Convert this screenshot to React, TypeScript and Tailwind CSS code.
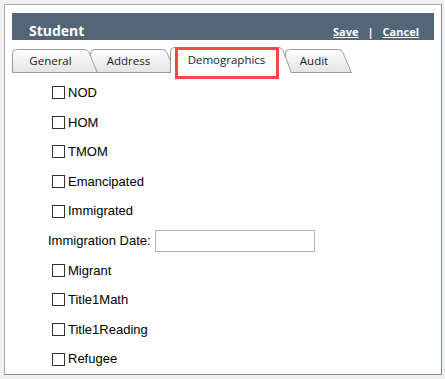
import React from 'react';

type TabProps = {
  label: string;
  w: number;
  h: number;
  selected?: boolean;
  className: string;
};

// folder-style tab: rounded top-left, slanted right edge
function TabShape({ w, h, selected, id }: { w: number; h: number; selected?: boolean; id: string }) {
  const edge = `M0.5 ${h} V4.5 Q0.5 0.5 4.5 0.5 H${w - 14} Q${w - 10} 0.5 ${w - 9} 3.5 L${w - 0.5} ${h}`;
  return (
    <svg className="absolute inset-0" width={w} height={h} viewBox={`0 0 ${w} ${h}`}>
      <defs>
        <linearGradient id={id} x1="0" y1="0" x2="0" y2="1">
          <stop offset="0" stopColor="#ffffff" />
          <stop offset="1" stopColor="#e3e3e3" />
        </linearGradient>
      </defs>
      <path d={`${edge} Z`} fill={selected ? '#ffffff' : `url(#${id})`} stroke="none" />
      <path d={edge} fill="none" stroke="#9c9c9c" strokeWidth="1" />
      {!selected && <path d={`M0 ${h - 0.5} H${w}`} stroke="#9c9c9c" strokeWidth="1" />}
    </svg>
  );
}

function Tab({ label, w, h, selected, className }: TabProps) {
  return (
    <div className={`relative flex items-center justify-center pr-[9px] ${className}`}>
      <TabShape w={w} h={h} selected={selected} id={`tabgrad-${label}`} />
      <span className="relative text-[11.5px] text-[#222] font-['Open_Sans',sans-serif]">{label}</span>
      {selected && (
        <div className="absolute left-[5px] top-0 w-[104px] h-[32px] border-[3px] border-[#f44848]" />
      )}
    </div>
  );
}

function Check({ label }: { label: string }) {
  return (
    <div className="h-[29.6px] flex items-center pl-[40px]">
      <span className="w-[13px] h-[13px] border border-[#333] bg-white" />
      <span className="ml-[3px] text-[13px] text-black font-['Liberation_Sans',Arial,sans-serif]">{label}</span>
    </div>
  );
}

export default function App() {
  return (
    <div className="w-[445px] h-[379px] bg-[#f0f0f0] pt-[4px] pl-[4px] pr-[3px] pb-[4px]">
      <div className="h-full bg-white border border-[#ababab] border-r-[#7f8b97] border-b-[#7f8b97] pt-[8px] pl-[7px] pr-[7px]">
        {/* header */}
        <div className="h-[27px] bg-[#536578] flex items-end justify-between pl-[17px] pr-[15px] font-['Open_Sans',sans-serif] text-white">
          <span className="text-[14px] font-bold leading-[18px]">Student</span>
          <span className="text-[11px] font-bold leading-[16px]">
            <span className="underline">Save</span>
            <span className="mx-[9px]">|</span>
            <span className="underline">Cancel</span>
          </span>
        </div>

        {/* tabs */}
        <div className="mt-[7px] h-[26px] flex items-end">
          <Tab label="General" w={86} h={24} className="w-[86px] h-[24px] z-30" />
          <Tab label="Address" w={86} h={24} className="w-[86px] h-[24px] -ml-[8px] z-20" />
          <Tab label="Demographics" w={122} h={26} selected className="w-[122px] h-[26px] -ml-[6px] z-40" />
          <Tab label="Audit" w={67} h={24} className="w-[67px] h-[24px] -ml-[7px] z-10" />
        </div>

        {/* fields */}
        <div className="pt-[5px]">
          <Check label="NOD" />
          <Check label="HOM" />
          <Check label="TMOM" />
          <Check label="Emancipated" />
          <Check label="Immigrated" />
          <div className="h-[29.6px] flex items-center pl-[36px]">
            <span className="text-[13px] text-black font-['Liberation_Sans',Arial,sans-serif]">Immigration Date:</span>
            <input className="ml-[4px] w-[160px] h-[22px] border border-[#b4b4b4] bg-white" />
          </div>
          <Check label="Migrant" />
          <Check label="Title1Math" />
          <Check label="Title1Reading" />
          <Check label="Refugee" />
        </div>
      </div>
    </div>
  );
}
